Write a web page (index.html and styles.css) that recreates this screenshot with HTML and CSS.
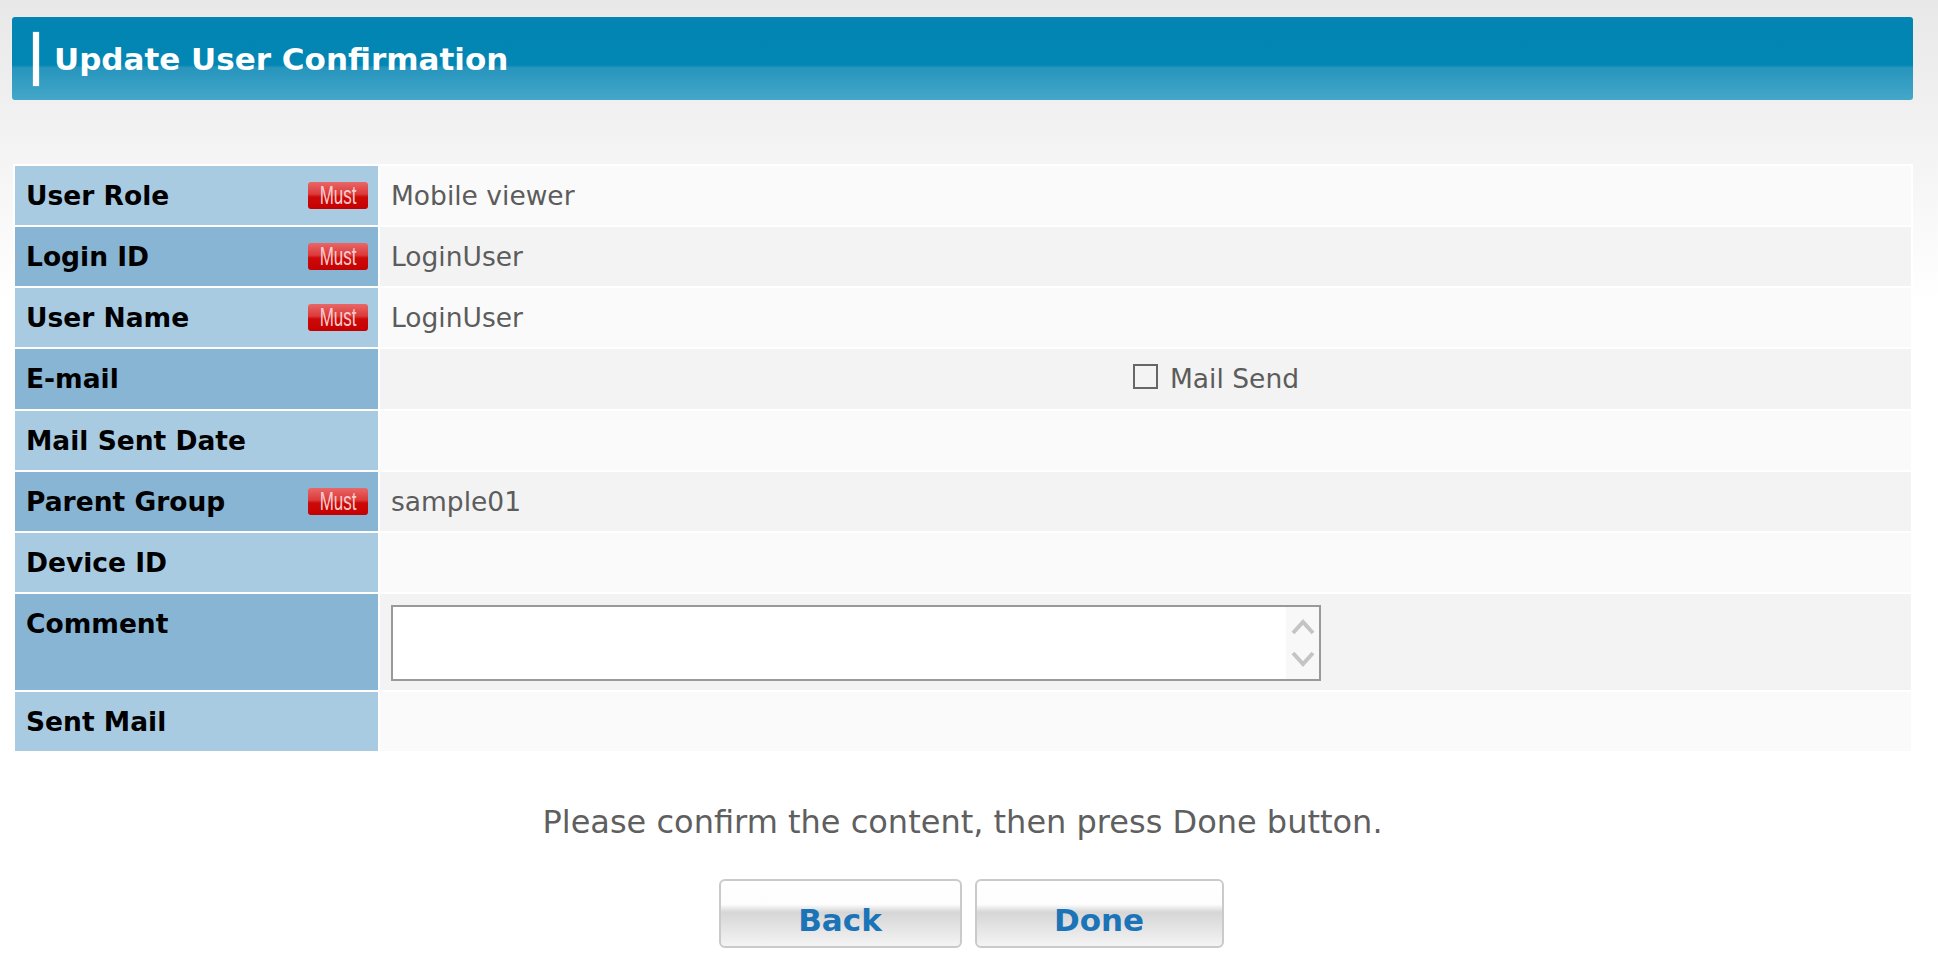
FILE: index.html
```html
<!DOCTYPE html>
<html lang="en">
<head>
  <meta charset="UTF-8">
  <meta name="viewport" content="width=device-width, initial-scale=1.0">
  <title>Update User Confirmation</title>
  <link rel="stylesheet" href="styles.css">
</head>
<body>

  <h1 class="page-title"><span class="title-bar"></span>Update User Confirmation</h1>

  <table class="form-table">
    <tr class="odd">
      <th><div class="label"><span>User Role</span><span class="must"><span>Must</span></span></div></th>
      <td>Mobile viewer</td>
    </tr>
    <tr class="even">
      <th><div class="label"><span>Login ID</span><span class="must"><span>Must</span></span></div></th>
      <td>LoginUser</td>
    </tr>
    <tr class="odd">
      <th><div class="label"><span>User Name</span><span class="must"><span>Must</span></span></div></th>
      <td>LoginUser</td>
    </tr>
    <tr class="even">
      <th><div class="label"><span>E-mail</span></div></th>
      <td>
        <label class="mail-send"><input type="checkbox"> Mail Send</label>
      </td>
    </tr>
    <tr class="odd">
      <th><div class="label"><span>Mail Sent Date</span></div></th>
      <td></td>
    </tr>
    <tr class="even">
      <th><div class="label"><span>Parent Group</span><span class="must"><span>Must</span></span></div></th>
      <td>sample01</td>
    </tr>
    <tr class="odd">
      <th><div class="label"><span>Device ID</span></div></th>
      <td></td>
    </tr>
    <tr class="even comment-row">
      <th><div class="label"><span>Comment</span></div></th>
      <td>
        <div class="comment-box">
          <textarea></textarea>
          <div class="scroll-strip">
            <svg width="33" height="72" viewBox="0 0 33 72">
              <polyline points="7,26 17,15 27,26" fill="none" stroke="#c4c4c4" stroke-width="4"/>
              <polyline points="7,46 17,57 27,46" fill="none" stroke="#c4c4c4" stroke-width="4"/>
            </svg>
          </div>
        </div>
      </td>
    </tr>
    <tr class="odd">
      <th><div class="label"><span>Sent Mail</span></div></th>
      <td></td>
    </tr>
  </table>

  <p class="message">Please confirm the content, then press Done button.</p>

  <div class="buttons">
    <button class="btn btn-back">Back</button>
    <button class="btn btn-done">Done</button>
  </div>

</body>
</html>
```

FILE: styles.css
```css
body {
  margin: 0;
  padding: 17px 25px 40px 12px;
  font-family: "DejaVu Sans", Verdana, sans-serif;
  background: #fff linear-gradient(to bottom, #e8e8e8 0, #ffffff 300px) no-repeat;
}
.page-title {
  display: flex;
  align-items: center;
  height: 83px;
  margin: 0;
  padding-left: 21px;
  border-radius: 3px;
  background: linear-gradient(to bottom, #0285b3 0%, #0286b4 58%, #2795bd 61%, #44a7c9 100%);
  color: #fff;
  font-size: 31px;
  font-weight: bold;
}
.title-bar {
  width: 6px;
  height: 54px;
  margin-right: 15px;
  background: #fff;
  box-shadow: 0 0 1px #bfe2ef;
}
.form-table {
  width: 1900px;
  margin: 64px 0 0 1px;
  border-spacing: 2px;
  background: #fff;
  font-size: 26.5px;
}
.form-table th,
.form-table td {
  height: 31px;
  padding: 14px 11px;
  line-height: 31px;
  vertical-align: middle;
  text-align: left;
}
.form-table th {
  width: 342px;
  padding-right: 10px;
  color: #000;
  font-weight: bold;
}
.form-table td {
  color: #5c5c5c;
}
.odd th {
  background: #a9cbe2;
}
.even th {
  background: #88b5d4;
}
.odd td {
  background: #fafafa;
}
.even td {
  background: #f3f3f3;
}
.label {
  display: flex;
  justify-content: space-between;
  align-items: center;
}
.must {
  display: flex;
  justify-content: center;
  align-items: center;
  width: 60px;
  height: 27px;
  border-radius: 3px;
  background: linear-gradient(to bottom, #e86767 0%, #dc3a3a 45%, #cc0a0a 55%, #c60000 100%);
  overflow: hidden;
}
.must span {
  display: inline-block;
  font-family: "Liberation Sans", Arial, sans-serif;
  font-size: 25px;
  font-weight: normal;
  line-height: 27px;
  color: #f7cccc;
  transform: scaleX(0.68);
}
.mail-send {
  display: inline-flex;
  align-items: center;
  margin-left: 742px;
}
.mail-send input {
  appearance: none;
  width: 25px;
  height: 25px;
  margin: 0 12px 5px 0;
  border: 2px solid #666;
  background: transparent;
}
.comment-row th {
  vertical-align: top;
}
.comment-row td {
  padding-top: 11px;
  padding-bottom: 9px;
}
.comment-box {
  display: flex;
  width: 930px;
  height: 76px;
  box-sizing: border-box;
  border: 2px solid #999;
  background: #fff;
}
.comment-box textarea {
  flex: 1;
  border: none;
  outline: none;
  resize: none;
  padding: 4px;
  font-family: inherit;
  font-size: 20px;
}
.scroll-strip {
  width: 33px;
  background: #f8f8f8;
}
.scroll-strip svg {
  display: block;
}
.message {
  margin: 50px 0 0;
  text-align: center;
  font-size: 32px;
  line-height: 38px;
  color: #5f5f5f;
}
.buttons {
  display: flex;
  justify-content: center;
  gap: 13px;
  margin-top: 38px;
  padding-left: 17px;
}
.btn {
  height: 69px;
  padding: 14px 0 0;
  border: 2px solid #cacaca;
  border-radius: 6px;
  background: linear-gradient(to bottom, #ffffff 0%, #fdfdfd 36%, #d6d6d6 48%, #f4f4f4 100%);
  color: #1b73b8;
  font-family: "DejaVu Sans", Verdana, sans-serif;
  font-size: 31px;
  font-weight: bold;
  cursor: pointer;
}
.btn-back {
  width: 243px;
}
.btn-done {
  width: 249px;
}
```
